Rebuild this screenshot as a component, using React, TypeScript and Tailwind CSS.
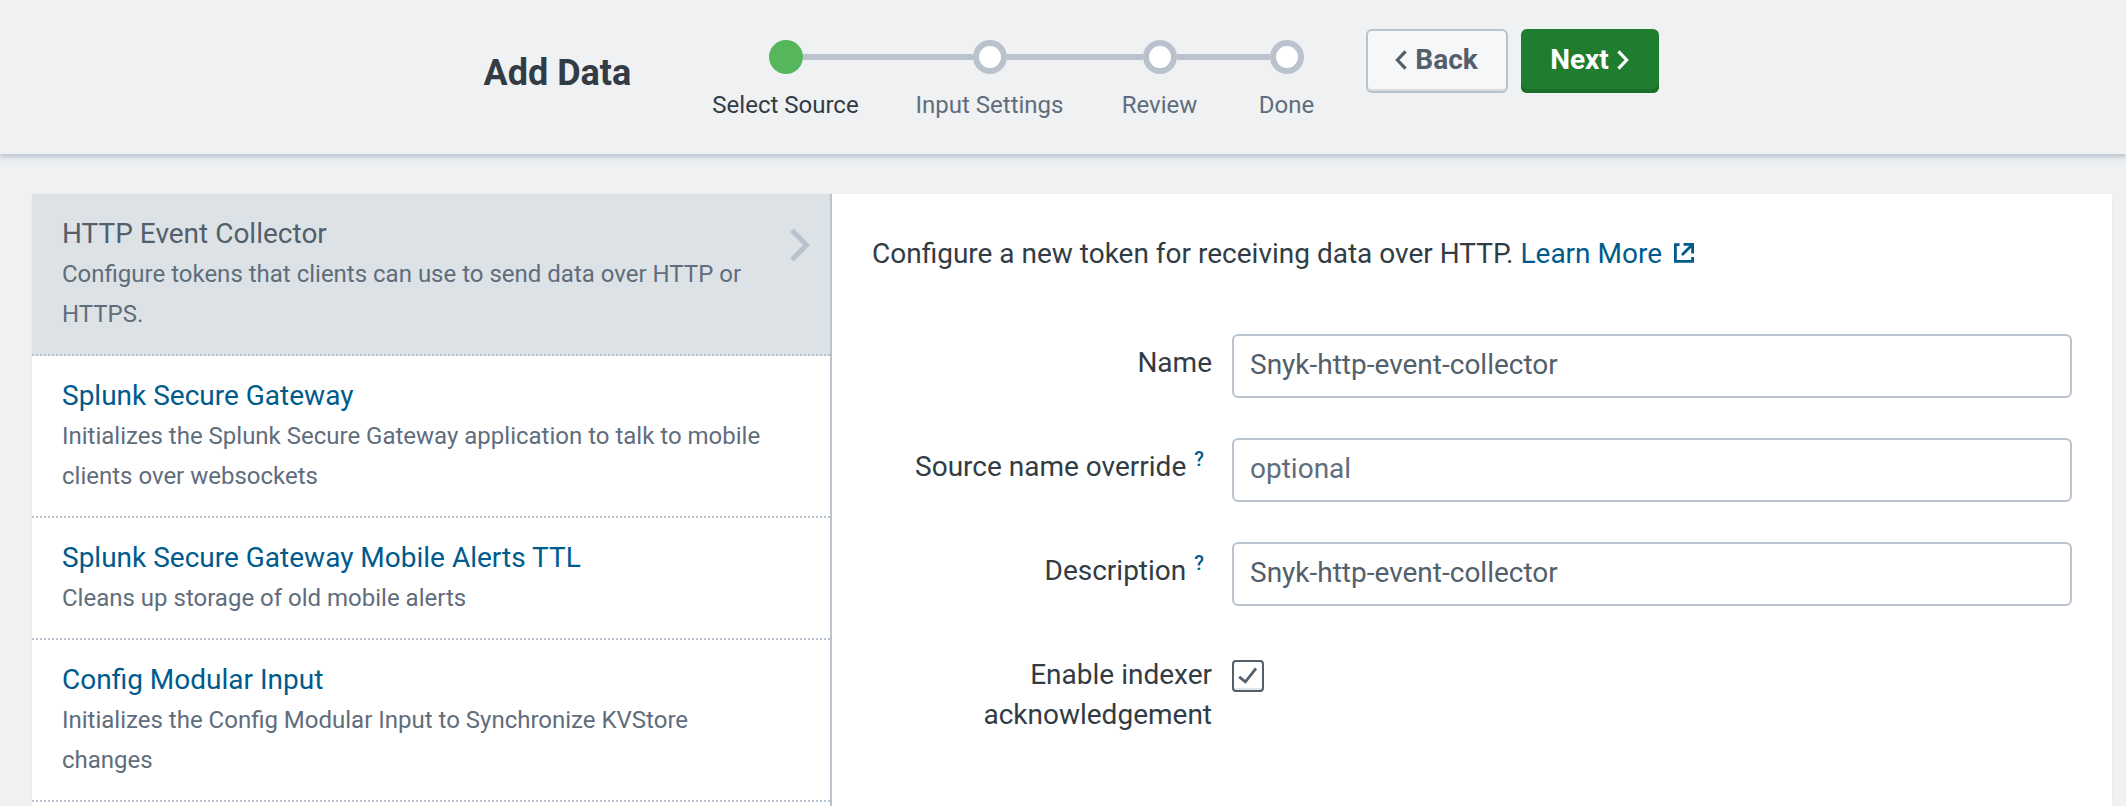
import type { ReactNode } from "react";

type Step = { label: string; width: string };

const steps: Step[] = [
  { label: "Select Source", width: "w-[204px]" },
  { label: "Input Settings", width: "w-[204px]" },
  { label: "Review", width: "w-[136px]" },
  { label: "Done", width: "w-[118px]" },
];

const sources = [
  {
    title: "HTTP Event Collector",
    text: "Configure tokens that clients can use to send data over HTTP or HTTPS.",
  },
  {
    title: "Splunk Secure Gateway",
    text: "Initializes the Splunk Secure Gateway application to talk to mobile clients over websockets",
  },
  {
    title: "Splunk Secure Gateway Mobile Alerts TTL",
    text: "Cleans up storage of old mobile alerts",
  },
  {
    title: "Config Modular Input",
    text: "Initializes the Config Modular Input to Synchronize KVStore changes",
  },
];

function Chevron({ left = false }: { left?: boolean }) {
  return (
    <svg viewBox="0 0 12 20" className="h-5 w-3" fill="none" stroke="currentColor" strokeWidth="3.2" aria-hidden="true">
      <path d={left ? "M10.6 1.4 2.4 10l8.2 8.6" : "M1.4 1.4 9.6 10l-8.2 8.6"} />
    </svg>
  );
}

function StepItem({ step, index }: { step: Step; index: number }) {
  const active = index === 0;
  const last = index === steps.length - 1;
  return (
    <li className={`flex flex-col ${step.width}`} aria-current={active ? "step" : undefined}>
      <div className="flex items-center">
        <span className={`h-[6px] flex-1 ${active ? "" : "bg-[#bac3cd]"}`} />
        <span
          className={`size-[34px] rounded-full ${active ? "bg-[#56b65c]" : "border-[6px] border-[#bac3cd] bg-white"}`}
        />
        <span className={`h-[6px] flex-1 ${last ? "" : "bg-[#bac3cd]"}`} />
      </div>
      <span
        className={`mt-[11px] text-center text-2xl leading-[40px] whitespace-nowrap ${active ? "text-[#323c44]" : "text-[#5f6d7c]"}`}
      >
        {step.label}
      </span>
    </li>
  );
}

function Field({ id, label, help = false, children }: { id: string; label: string; help?: boolean; children: ReactNode }) {
  return (
    <div className="grid grid-cols-[340px_1fr] gap-x-5">
      <div className="flex justify-end pt-[9px]">
        <label htmlFor={id} className="max-w-[300px] text-right">
          {label}
        </label>
        {help && (
          <a
            href="#help"
            aria-label={`Help for ${label}`}
            className="mr-2 ml-2 text-xl leading-[24px] font-medium text-[#005b8c]"
          >
            ?
          </a>
        )}
      </div>
      {children}
    </div>
  );
}

const inputClass =
  "h-16 w-full min-w-0 rounded-md border-2 border-[#b9c3cd] bg-white px-4 pb-1 text-[28px] text-[#535f6b] placeholder-[#5f6d7c] outline-none";

export default function App() {
  return (
    <div className="flex min-h-screen flex-col bg-[#f0f1f3] font-['Roboto','Liberation_Sans',sans-serif] text-[28px] leading-[40px] text-[#323c44]">
      <header className="flex h-[154px] justify-center pl-4 shadow-[0_3px_3px_#c3ccd4,0_5px_9px_#d9e0e5]">
        <h1 className="mt-[53px] w-[200px] text-4xl font-bold leading-[40px]">Add Data</h1>
        <ol className="mt-10 flex">
          {steps.map((step, i) => (
            <StepItem key={step.label} step={step} index={i} />
          ))}
        </ol>
        <div className="mt-[29px] ml-5 flex items-start gap-[13px] font-bold">
          <button
            type="button"
            className="flex h-16 w-[142px] items-center justify-center gap-2 rounded-md border-2 border-[#b9c3cd] bg-[#f6f7f9] pb-[2px] text-[#535f6b] shadow-[inset_0_-2px_0_#dadcdf]"
          >
            <Chevron left />
            Back
          </button>
          <button
            type="button"
            className="flex h-16 w-[138px] items-center justify-center gap-2 rounded-md bg-[#1f7d30] pb-[2px] text-white shadow-[inset_0_-4px_0_#1b6e2a]"
          >
            Next
            <Chevron />
          </button>
        </div>
      </header>

      <div className="mt-10 mr-[14px] ml-8 flex flex-1 bg-white shadow-[0_0_2px_#e3e6ea]">
        <nav className="w-[800px] shrink-0 border-r-2 border-[#b9c3cd]" aria-label="Data sources">
          <ul>
            {sources.map((source, i) => (
              <li
                key={source.title}
                className={`border-b-2 border-dotted border-[#b9c3cd] ${i === 0 ? "bg-[#dde2e6]" : ""}`}
              >
                <a href="#source" className="flex items-start justify-between py-5 pr-5 pl-[30px]">
                  <span className="flex w-[700px] flex-col">
                    <span className={i === 0 ? "text-[#535f6b]" : "text-[#005b8c]"}>{source.title}</span>
                    <span className="text-2xl leading-[40px] text-[#5f6d7c]">{source.text}</span>
                  </span>
                  {i === 0 && (
                    <svg
                      viewBox="0 0 20 34"
                      className="mt-[14px] h-[34px] w-5"
                      fill="none"
                      stroke="#b9c3cd"
                      strokeWidth="5"
                      aria-hidden="true"
                    >
                      <path d="M2 2.2 16.4 17 2 31.8" />
                    </svg>
                  )}
                </a>
              </li>
            ))}
          </ul>
        </nav>

        <main className="min-w-0 flex-1 px-10 pt-10 pb-8">
          <p>
            Configure a new token for receiving data over HTTP.{" "}
            <a href="#learn" className="text-[#005b8c]">
              Learn More
              <svg
                viewBox="0 0 20 20"
                className="ml-3 inline-block size-5 align-baseline"
                fill="none"
                stroke="currentColor"
                strokeWidth="2.8"
                aria-hidden="true"
              >
                <path d="M5.6 1.7H1.4v16.6h17.2v-4.4" />
                <path d="M9.6 1.4h9v9M18.2 1.8 8 12" />
              </svg>
            </a>
          </p>
          <form className="mt-[60px] flex flex-col gap-10">
            <Field id="name" label="Name">
              <input id="name" type="text" defaultValue="Snyk-http-event-collector" className={inputClass} />
            </Field>
            <Field id="source-name" label="Source name override" help>
              <input id="source-name" type="text" placeholder="optional" className={inputClass} />
            </Field>
            <Field id="description" label="Description" help>
              <input id="description" type="text" defaultValue="Snyk-http-event-collector" className={inputClass} />
            </Field>
            <Field id="ack" label="Enable indexer acknowledgement">
              <span className="mt-[14px] grid size-8">
                <input
                  id="ack"
                  type="checkbox"
                  defaultChecked
                  className="peer col-start-1 row-start-1 size-8 appearance-none rounded-sm border-2 border-[#535f6b] bg-white shadow-[inset_0_-2px_0_#e2e4e3]"
                />
                <svg
                  viewBox="0 0 32 32"
                  className="pointer-events-none invisible col-start-1 row-start-1 size-8 peer-checked:visible"
                  fill="none"
                  stroke="#535f6b"
                  strokeWidth="2.8"
                  aria-hidden="true"
                >
                  <path d="M7.2 16.8l6.2 5L24 8.4" />
                </svg>
              </span>
            </Field>
          </form>
        </main>
      </div>
    </div>
  );
}
